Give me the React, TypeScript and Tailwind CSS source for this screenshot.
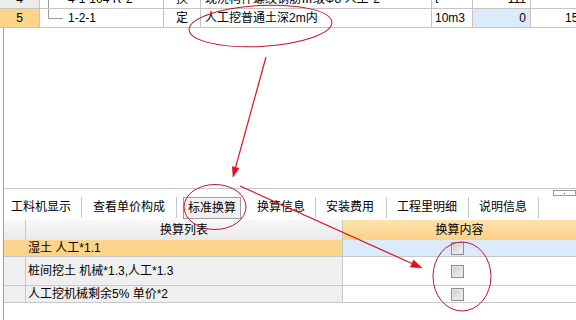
import React from 'react';

type TopRowProps = {
  num: string;
  numBg: string;
  code: string;
  last?: boolean;
  type: string;
  name: string;
  unit: string;
  qty: string;
  qtyBg: string;
  extra: string;
};

const TopRow: React.FC<TopRowProps> = ({ num, numBg, code, last, type, name, unit, qty, qtyBg, extra }) => (
  <div className="flex h-[19px] border-b border-[#c4c4c4] text-[12px] leading-[18px] text-black">
    <div className={`w-[40px] shrink-0 border-r border-[#c4c4c4] text-center ${numBg}`}>{num}</div>
    <div className="relative w-[124px] shrink-0 border-r border-[#c4c4c4] pl-[28px] whitespace-nowrap">
      {last ? (
        <span className="absolute left-[8px] top-0 h-[10px] w-[15px] border-l border-b border-[#9a9a9a]" />
      ) : (
        <span className="absolute left-[8px] top-0 bottom-0 border-l border-[#9a9a9a]" />
      )}
      {code}
    </div>
    <div className="w-[37px] shrink-0 border-r border-[#c4c4c4] text-center">{type}</div>
    <div className="w-[231px] shrink-0 overflow-hidden whitespace-nowrap border-r border-[#c4c4c4] pl-[4px]">{name}</div>
    <div className="w-[41px] shrink-0 border-r border-[#c4c4c4] pl-[3px]">{unit}</div>
    <div className={`w-[58px] shrink-0 border-r border-[#c4c4c4] pr-[4px] text-right ${qtyBg}`}>{qty}</div>
    <div className="flex-1 whitespace-nowrap pl-[34px]">{extra}</div>
  </div>
);

const Check: React.FC = () => (
  <span className="block h-[13px] w-[13px] border border-[#8e8e8e] bg-gradient-to-br from-[#c9c9c9] to-[#f7f7f7] shadow-[inset_0_0_0_1px_#e6e6e6]" />
);

const Sep: React.FC = () => <span className="h-[21px] w-px shrink-0 bg-[#c8c8c8]" />;

const rows = [
  { text: '湿土 人工*1.1', h: 'h-[17px]', left: 'bg-[#fcd48c]', head: 'bg-[#fcd48c] border-[#fcd48c]', right: 'bg-[#dcebfb]' },
  { text: '桩间挖土 机械*1.3,人工*1.3', h: 'h-[29px]', left: 'bg-[#efefef]', head: 'bg-[#efefef] border-[#c8c8c8]', right: 'bg-white' },
  { text: '人工挖机械剩余5% 单价*2', h: 'h-[17px]', left: 'bg-[#efefef]', head: 'bg-[#efefef] border-[#c8c8c8]', right: 'bg-white' },
];

export default function App() {
  return (
    <div className="relative h-[320px] w-[576px] overflow-hidden bg-white font-['Liberation_Sans','Noto_Sans_CJK_SC',sans-serif] text-black">
      {/* 定额列表（上部） */}
      <div className="h-[28px] overflow-hidden">
        <div className="mt-[-10px]">
          <TopRow
            num="4"
            numBg="bg-[#ececec]"
            code="4-1-104 R*2"
            type="换"
            name="现浇构件螺纹钢筋Ⅲ级Φ8 人工*2"
            unit="t"
            qty="111"
            qtyBg="bg-white"
            extra=""
          />
          <TopRow
            num="5"
            numBg="bg-[#fcd48c]"
            code="1-2-1"
            last
            type="定"
            name="人工挖普通土深2m内"
            unit="10m3"
            qty="0"
            qtyBg="bg-[#dcebfb]"
            extra="15"
          />
        </div>
      </div>

      <div className="ml-[3px] flex h-[292px] flex-col border-l border-[#a0a0a0]">
        <div className="h-[160px]" />

        {/* 页签 */}
        <div className="relative flex h-[32px] items-start border-t border-[#c8c8c8] pt-[8px] text-[12px] leading-[21px]">
          <span className="pl-[7px] pr-[10px]">工料机显示</span>
          <Sep />
          <span className="pl-[11px] pr-[11px]">查看单价构成</span>
          <Sep />
          <span className="ml-[6px] h-[22px] border border-[#9c9c9c] bg-[#f0f0f0] px-[4px] shadow-[inset_1px_1px_0_#ffffff]">标准换算</span>
          <span className="pl-[16px] pr-[10px]">换算信息</span>
          <Sep />
          <span className="pl-[10px] pr-[12px]">安装费用</span>
          <Sep />
          <span className="pl-[10px] pr-[11px]">工程里明细</span>
          <Sep />
          <span className="pl-[10px] pr-[11px]">说明信息</span>
          <Sep />
          <span className="absolute right-0 top-[1px] flex h-[6px] w-[23px] items-center justify-center border border-[#9a9a9a] bg-white">
            <span className="h-px w-px bg-[#555]" />
          </span>
        </div>

        {/* 换算表格 */}
        <div className="text-[12px]">
          <div className="flex h-[20px] leading-[20px]">
            <div className="w-[22px] shrink-0 border-r border-[#c8c8c8] bg-gradient-to-b from-[#f8f8f8] to-[#e9e9e9]" />
            <div className="w-[317px] shrink-0 border-r border-[#c8c8c8] bg-gradient-to-b from-[#f8f8f8] to-[#e9e9e9] text-center">换算列表</div>
            <div className="flex-1 bg-gradient-to-b from-[#fee3ab] to-[#fbd189] text-center">换算内容</div>
          </div>
          {rows.map((r) => (
            <div key={r.text} className={`flex border-b border-[#c8c8c8] ${r.h}`}>
              <div className={`w-[22px] shrink-0 border-r ${r.head}`} />
              <div className={`flex w-[317px] shrink-0 items-center border-r border-[#c8c8c8] pl-[2px] ${r.left}`}>{r.text}</div>
              <div className={`flex flex-1 items-center justify-center pr-[4px] ${r.right}`}>
                <Check />
              </div>
            </div>
          ))}
        </div>
      </div>

      {/* 红色标注 */}
      <svg className="pointer-events-none absolute left-0 top-0" width="576" height="320" viewBox="0 0 576 320">
        <g fill="none" stroke="#c0142c" strokeWidth="1">
          <ellipse cx="260.5" cy="26" rx="71.5" ry="20.5" transform="rotate(-3 260.5 26)" />
          <ellipse cx="215" cy="207" rx="31" ry="22.5" />
          <ellipse cx="462" cy="276.5" rx="29" ry="34.5" />
        </g>
        <g stroke="#dd1020" strokeWidth="1.2" fill="#dd1020">
          <line x1="266" y1="57" x2="235.6" y2="167.4" />
          <polygon points="233,177 239,168.3 232.3,166.5" strokeWidth="0.5" />
          <line x1="240" y1="186" x2="412" y2="263.5" />
          <polygon points="422,268 410.4,267.1 413.6,259.9" strokeWidth="0.5" />
        </g>
      </svg>
    </div>
  );
}
